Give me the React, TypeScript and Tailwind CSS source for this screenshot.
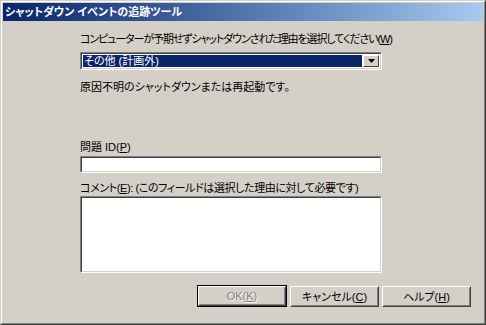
import React from "react";

const font = "font-['Liberation_Sans','Noto_Sans_CJK_JP',sans-serif] [font-feature-settings:'palt']";

function Ul({ children }: { children: React.ReactNode }) {
  return <span className="underline underline-offset-1">{children}</span>;
}

function Sunken({ className, children }: { className?: string; children?: React.ReactNode }) {
  return (
    <div className={`border border-t-[#808080] border-l-[#808080] border-r-white border-b-white ${className ?? ""}`}>
      <div className="h-full border border-t-[#404040] border-l-[#404040] border-r-[#d4d0c8] border-b-[#d4d0c8] bg-white">
        {children}
      </div>
    </div>
  );
}

function Button({ children, isDefault, disabled }: { children: React.ReactNode; isDefault?: boolean; disabled?: boolean }) {
  const inner = (
    <div className="h-full border border-t-white border-l-white border-r-[#404040] border-b-[#404040]">
      <div className="flex h-full items-center justify-center border border-t-[#d4d0c8] border-l-[#d4d0c8] border-r-[#808080] border-b-[#808080]">
        <span className={disabled ? "text-[#808080] [text-shadow:1px_1px_0_#fff]" : "text-black"}>{children}</span>
      </div>
    </div>
  );
  if (isDefault) {
    return <div className="h-[22px] w-[90px] border border-black">{inner}</div>;
  }
  return <div className="mt-[1px] h-[21px] w-[89px]">{inner}</div>;
}

export default function App() {
  return (
    <div className={`h-[325px] w-[486px] overflow-hidden whitespace-nowrap bg-[#d4d0c8] text-[11px] leading-[14px] text-black ${font}`}>
      <div className="h-full border border-t-[#d4d0c8] border-l-[#d4d0c8] border-r-[#404040] border-b-[#404040]">
        <div className="flex h-full flex-col border border-t-white border-l-white border-r-[#808080] border-b-[#808080] p-[1px]">
          <div className="flex h-[18px] items-center bg-gradient-to-r from-[#0a246a] to-[#a6caf0] pl-[2px] font-bold text-white">
            シャットダウン イベントの追跡ツール
          </div>

          <div className="ml-[77px] w-[302px]">
            <div className="mt-[11px] tracking-[-1.1px]">
              コンピューターが予期せずシャットダウンされた理由を選択してください(<Ul>W</Ul>)
            </div>

            <Sunken className="mt-[6px] h-[18px]">
              <div className="flex h-full items-center p-[1px]">
                <div className="flex h-full flex-1 items-center bg-[#0a246a] pl-[1px] text-white">その他 (計画外)</div>
                <div className="ml-[1px] flex h-full w-[16px] items-center justify-center border border-t-white border-l-white border-r-[#404040] border-b-[#404040] bg-[#d4d0c8]">
                  <svg width="7" height="4" viewBox="0 0 7 4">
                    <path d="M0 0h7L3.5 4z" fill="#000" />
                  </svg>
                </div>
              </div>
            </Sunken>

            <div className="mt-[10px]">原因不明のシャットダウンまたは再起動です。</div>

            <div className="mt-[46px]">
              問題 ID(<Ul>P</Ul>)
            </div>
            <Sunken className="mt-[2px] h-[17px]" />

            <div className="mt-[8px] tracking-[-0.4px]">
              コメント(<Ul>E</Ul>): (このフィールドは選択した理由に対して必要です)
            </div>
            <Sunken className="mt-[1px] h-[77px]" />
          </div>

          <div className="mr-[12px] mt-[12px] flex justify-end gap-[3px]">
            <Button isDefault disabled>
              OK(<Ul>K</Ul>)
            </Button>
            <Button>
              キャンセル(<Ul>C</Ul>)
            </Button>
            <Button>
              ヘルプ(<Ul>H</Ul>)
            </Button>
          </div>
        </div>
      </div>
    </div>
  );
}
